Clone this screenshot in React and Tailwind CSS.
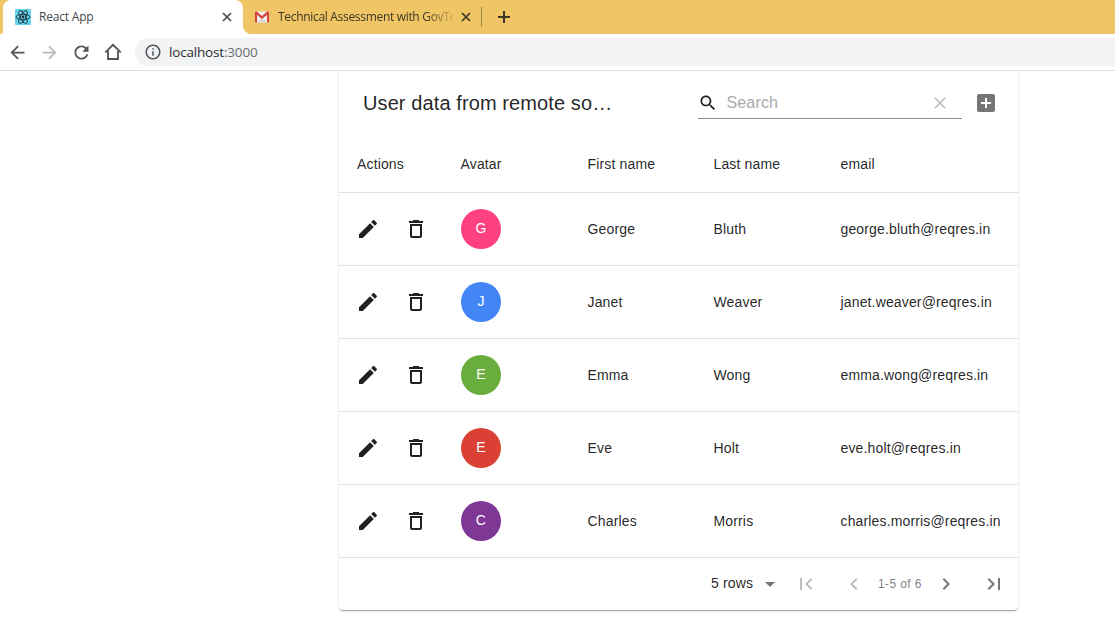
import React from "react";

const users = [
  { first: "George", last: "Bluth", email: "george.bluth@reqres.in", color: "bg-[#ff4081]" },
  { first: "Janet", last: "Weaver", email: "janet.weaver@reqres.in", color: "bg-[#4285f4]" },
  { first: "Emma", last: "Wong", email: "emma.wong@reqres.in", color: "bg-[#68ad3d]" },
  { first: "Eve", last: "Holt", email: "eve.holt@reqres.in", color: "bg-[#db4035]" },
  { first: "Charles", last: "Morris", email: "charles.morris@reqres.in", color: "bg-[#7e3794]" },
];

const paths = {
  edit: "M3 17.25V21h3.75L17.81 9.94l-3.75-3.75L3 17.25zM20.71 7.04c.39-.39.39-1.02 0-1.41l-2.34-2.34c-.39-.39-1.02-.39-1.41 0l-1.83 1.83 3.75 3.75 1.83-1.83z",
  trash: "M6 19c0 1.1.9 2 2 2h8c1.1 0 2-.9 2-2V7H6v12zM8 9h8v10H8V9zm7.5-5l-1-1h-5l-1 1H5v2h14V4z",
  search: "M15.5 14h-.79l-.28-.27C15.41 12.59 16 11.11 16 9.5 16 5.91 13.09 3 9.5 3S3 5.91 3 9.5 5.91 16 9.5 16c1.61 0 3.09-.59 4.23-1.57l.27.28v.79l5 4.99L20.49 19l-4.99-5zm-6 0C7.01 14 5 11.99 5 9.5S7.01 5 9.5 5 14 7.01 14 9.5 11.99 14 9.5 14z",
  clear: "M19 6.41L17.59 5 12 10.59 6.41 5 5 6.41 10.59 12 5 17.59 6.41 19 12 13.41 17.59 19 19 17.59 13.41 12z",
  addBox: "M19 3H5c-1.11 0-2 .9-2 2v14c0 1.1.89 2 2 2h14c1.1 0 2-.9 2-2V5c0-1.1-.9-2-2-2zm-2 10h-4v4h-2v-4H7v-2h4V7h2v4h4v2z",
  drop: "M7 10l5 5 5-5z",
  first: "M18.41 16.59L13.82 12l4.59-4.59L17 6l-6 6 6 6zM6 6h2v12H6z",
  prev: "M15.41 7.41L14 6l-6 6 6 6 1.41-1.41L10.83 12z",
  next: "M10 6L8.59 7.41 13.17 12l-4.58 4.59L10 18l6-6z",
  last: "M5.59 7.41L10.18 12l-4.59 4.59L7 18l6-6-6-6zM16 6h2v12h-2z",
  back: "M20 11H7.83l5.59-5.59L12 4l-8 8 8 8 1.41-1.41L7.83 13H20v-2z",
  forward: "M12 4l-1.41 1.41L16.17 11H4v2h12.17l-5.58 5.59L12 20l8-8z",
  reload: "M17.65 6.35C16.2 4.9 14.21 4 12 4c-4.42 0-7.99 3.58-7.99 8s3.57 8 7.99 8c3.73 0 6.84-2.55 7.73-6h-2.08c-.82 2.33-3.04 4-5.65 4-3.31 0-6-2.69-6-6s2.69-6 6-6c1.66 0 3.14.69 4.22 1.78L13 11h7V4l-2.35 2.35z",
  info: "M11 7h2v2h-2zm0 4h2v6h-2zm1-9C6.48 2 2 6.48 2 12s4.48 10 10 10 10-4.48 10-10S17.52 2 12 2zm0 18c-4.41 0-8-3.59-8-8s3.59-8 8-8 8 3.59 8 8-3.59 8-8 8z",
};

function Icon({ name, className = "size-6" }) {
  return (
    <svg viewBox="0 0 24 24" fill="currentColor" className={`shrink-0 ${className}`} aria-hidden="true">
      <path d={paths[name]} />
    </svg>
  );
}

function TabClose() {
  return (
    <svg viewBox="0 0 10 10" className="size-[10px] shrink-0" stroke="currentColor" strokeWidth="1.7" fill="none">
      <path d="M1 1l8 8M9 1L1 9" />
    </svg>
  );
}

function ReactLogo() {
  return (
    <svg viewBox="0 0 16 16" className="size-4 shrink-0">
      <rect width="16" height="16" rx="1" fill="#61d4ee" />
      <g fill="none" stroke="#20303a" strokeWidth="0.9">
        <ellipse cx="8" cy="8" rx="7" ry="2.7" />
        <ellipse cx="8" cy="8" rx="7" ry="2.7" transform="rotate(60 8 8)" />
        <ellipse cx="8" cy="8" rx="7" ry="2.7" transform="rotate(120 8 8)" />
      </g>
      <circle cx="8" cy="8" r="1.4" fill="#20303a" />
    </svg>
  );
}

function GmailLogo() {
  return (
    <svg viewBox="0 0 14 12" className="h-3 w-[14px] shrink-0">
      <rect y="0.5" width="14" height="11" rx="1" fill="#f1eeee" />
      <path d="M2 11.5L7 7l5 4.5z" fill="#dcd8d8" />
      <path d="M0 1.3C0 .8.4.5 1 .5h.8L7 5l5.2-4.500H13c.6 0 1 .3 1 .8v9.400c0 .5-.4.8-.9.8H12V3.800L7 8 2 3.800v7.700H.9c-.5 0-.9-.3-.9-.8z" fill="#d5443b" />
    </svg>
  );
}

function Browser() {
  return (
    <header className="shrink-0 font-['Open_Sans',sans-serif]">
      <div className="flex h-[34px] bg-white">
        <div className="flex w-[243px] shrink-0 bg-[#f0c565]">
          <div className="w-[3px] shrink-0 bg-white">
            <div className="h-full rounded-br-md bg-[#f0c565]" />
          </div>
          <div className="flex grow items-center rounded-t-lg bg-white pr-[11px] pl-3 text-[#45484c]">
            <ReactLogo />
            <span className="ml-2 grow text-[12px] tracking-[-0.2px]">React App</span>
            <TabClose />
          </div>
        </div>
        <div className="flex grow items-center rounded-bl-lg bg-[#f0c565] pl-3 text-[#3c3725]">
          <GmailLogo />
          <span className="ml-[9px] w-[175px] whitespace-nowrap text-[12px] tracking-[-0.31px] [mask-image:linear-gradient(to_right,black_84%,rgba(0,0,0,0.15))]">
            Technical Assessment with GovTe
          </span>
          <span className="ml-2 flex"><TabClose /></span>
          <span className="ml-[10px] h-5 w-px bg-[#a18a50]" />
          <svg viewBox="0 0 12 12" className="ml-4 size-3" stroke="#3c3725" strokeWidth="2">
            <path d="M6 0v12M0 6h12" />
          </svg>
        </div>
      </div>
      <div className="flex h-[37px] items-center border-b border-[#dcdde0] bg-white pl-[7px] text-[#505357]">
        <Icon name="back" className="size-[21px]" />
        <Icon name="forward" className="ml-[11px] size-[21px] text-[#b9bbbd]" />
        <Icon name="reload" className="ml-[11px] size-[21px]" />
        <svg viewBox="0 0 20 20" className="ml-[11px] size-5 shrink-0" fill="none" stroke="currentColor" strokeWidth="1.8">
          <path d="M2.300 10.300L10 2.800l7.700 7.500M5 9v8h10V9" />
        </svg>
        <div className="ml-3 flex h-7 grow items-center rounded-l-full bg-[#f1f3f4] pl-[9px]">
          <Icon name="info" className="size-[18px]" />
          <span className="ml-[7px] text-[13.500px] tracking-[-0.18px] text-[#2b2d30]">
            localhost<span className="text-[#6a6e73]">:3000</span>
          </span>
        </div>
      </div>
    </header>
  );
}

const columns = "grid grid-cols-[121.500px_127px_126px_127px_1fr] items-center border-b border-[#e0e0e0]";

function UserRow({ user }) {
  return (
    <div className={`${columns} h-[73px]`}>
      <div className="flex pl-[17px]">
        <Icon name="edit" />
        <Icon name="trash" className="ml-6 size-6" />
      </div>
      <div className="pl-[0.5px]">
        <div className={`flex size-10 items-center justify-center rounded-full pb-[2px] text-white ${user.color}`}>
          {user.first[0]}
        </div>
      </div>
      <span>{user.first}</span>
      <span>{user.last}</span>
      <span>{user.email}</span>
    </div>
  );
}

export default function App() {
  return (
    <div className="flex h-[626px] w-[1115px] flex-col overflow-hidden bg-white">
      <Browser />
      <div className="flex grow overflow-hidden pl-[339px]">
        <main className="h-[539px] w-[679px] rounded-b bg-white font-['Liberation_Sans',sans-serif] text-[14px] tracking-[0.15px] text-black/87 shadow-[0_2px_1px_-1px_rgba(0,0,0,0.2),0_1px_1px_0_rgba(0,0,0,0.14),0_1px_3px_0_rgba(0,0,0,0.12)]">
          <div className="flex h-16 items-center pl-6">
            <h1 className="w-[250px] whitespace-nowrap text-[20px] tracking-[0.1px]">User data from remote so…</h1>
            <div className="ml-[85px] flex h-8 w-[264px] items-center border-b border-[#8c8c8c]">
              <Icon name="search" className="size-5" />
              <span className="ml-[8.500px] grow text-[16px] tracking-[0.15px] text-[#a9a9a9]">Search</span>
              <Icon name="clear" className="mr-3 size-5 text-black/26" />
            </div>
            <Icon name="addBox" className="ml-3 size-6 text-black/54" />
          </div>
          <div className={`${columns} h-[58px] pt-px`}>
            <span className="pl-[18px]">Actions</span>
            <span>Avatar</span>
            <span>First name</span>
            <span>Last name</span>
            <span>email</span>
          </div>
          {users.map((user) => (
            <UserRow key={user.email} user={user} />
          ))}
          <div className="flex h-[52px] items-center pl-[372px] text-black/54">
            <span className="w-[47px] pb-px text-black/87">5 rows</span>
            <Icon name="drop" />
            <Icon name="first" className="ml-3 size-6 text-black/26" />
            <Icon name="prev" className="ml-6 size-6 text-black/26" />
            <span className="ml-3 w-11 whitespace-nowrap text-[12px] tracking-[0.4px]">1-5 of 6</span>
            <Icon name="next" className="ml-3 size-6" />
            <Icon name="last" className="ml-6 size-6" />
          </div>
        </main>
      </div>
    </div>
  );
}
